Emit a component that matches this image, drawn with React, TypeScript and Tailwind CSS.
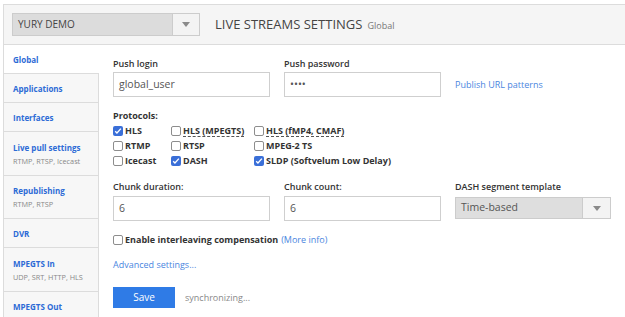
import React from "react";

const FONT = { fontFamily: '"Open Sans", "DejaVu Sans", sans-serif' };

type NavItem = { title: string; sub?: string; h: string };

const NAV: NavItem[] = [
  { title: "Global", h: "h-[29px]" },
  { title: "Applications", h: "h-[29px]" },
  { title: "Interfaces", h: "h-[29px]" },
  { title: "Live pull settings", sub: "RTMP, RTSP, Icecast", h: "h-[44px]" },
  { title: "Republishing", sub: "RTMP, RTSP", h: "h-[43px]" },
  { title: "DVR", h: "h-[29px]" },
  { title: "MPEGTS In", sub: "UDP, SRT, HTTP, HLS", h: "h-[44px]" },
];

function Caret() {
  return (
    <svg viewBox="0 0 8 5" className="h-[5px] w-[8px]" aria-hidden>
      <path d="M0 0h8L4 5z" fill="#8a8a8a" />
    </svg>
  );
}

function Check({ on }: { on?: boolean }) {
  if (on) {
    return (
      <span className="flex h-[10px] w-[10px] shrink-0 items-center justify-center rounded-[2px] bg-[#3a6fd8]">
        <svg viewBox="0 0 10 10" className="h-[8px] w-[8px]" aria-hidden>
          <path d="M1.5 5.2l2.2 2.2L8.6 2" fill="none" stroke="#fff" strokeWidth="1.7" />
        </svg>
      </span>
    );
  }
  return <span className="h-[10px] w-[10px] shrink-0 rounded-[2px] border border-[#8d8d8d] bg-white" />;
}

function Proto({ label, on, dashed }: { label: string; on?: boolean; dashed?: boolean }) {
  return (
    <div className="flex h-[15px] items-center gap-[2px]">
      <Check on={on} />
      <span
        className={
          dashed
            ? "border-b border-dashed border-[#555] text-[9px] font-bold leading-[11px] text-[#333]"
            : "text-[9px] font-bold leading-[11px] text-[#333]"
        }
      >
        {label}
      </span>
    </div>
  );
}

function Field({ label, value }: { label: string; value: string }) {
  return (
    <div className="flex w-[157px] flex-col">
      <div className="h-[12px] text-[9px] font-semibold leading-[12px] text-[#333]">{label}</div>
      <div className="mt-[2px] flex h-[25px] items-center border border-[#cfcfcf] bg-white pl-[5px] text-[10.5px] text-[#555]">
        {value}
      </div>
    </div>
  );
}

export default function App() {
  return (
    <div className="h-[317px] w-[625px] overflow-hidden bg-white pl-[3px] pt-[4px]" style={FONT}>
      <div className="flex h-full flex-col border-l border-t border-[#dcdcdc]">
        {/* header */}
        <div className="flex h-[40px] shrink-0 items-center border-b border-[#dcdcdc] bg-[#f5f5f5] pl-[8px]">
          <div className="flex h-[23px] w-[188px] border border-[#cccccc] bg-[#dcdcdc]">
            <div className="flex flex-1 items-center pl-[5px] text-[10px] uppercase text-[#444]">Yury demo</div>
            <div className="flex w-[27px] items-center justify-center border-l border-[#cccccc] bg-[#f3f3f3]">
              <Caret />
            </div>
          </div>
          <div className="ml-[15px] text-[13px] uppercase text-[#444]">Live streams settings</div>
          <div className="ml-[5px] mt-[2px] text-[9px] text-[#777]">Global</div>
        </div>

        <div className="flex flex-1">
          {/* sidebar */}
          <div className="flex w-[95px] shrink-0 flex-col">
            {NAV.map((item, i) => (
              <div
                key={item.title}
                className={[
                  "flex shrink-0 flex-col justify-center gap-[4px] border-b border-[#dcdcdc] pl-[9px]",
                  item.h,
                  i === 0 ? "bg-white" : "border-r bg-[#f7f7f7]",
                ].join(" ")}
              >
                <div className="text-[8px] font-bold leading-[11px] text-[#2d6bd6]">{item.title}</div>
                {item.sub && <div className="text-[7.3px] leading-[9px] text-[#888]">{item.sub}</div>}
              </div>
            ))}
            <div className="flex-1 border-r border-[#dcdcdc] bg-[#f7f7f7] pl-[9px] pt-[9px]">
              <div className="text-[8px] font-bold leading-[11px] text-[#2d6bd6]">MPEGTS Out</div>
            </div>
          </div>

          {/* main */}
          <div className="flex flex-1 flex-col pl-[14px] pt-[13px]">
            <div className="flex items-end gap-[14px]">
              <Field label="Push login" value="global_user" />
              <Field label="Push password" value="••••" />
              <div className="flex h-[25px] items-center text-[9px] text-[#4a86e0]">Publish URL patterns</div>
            </div>

            <div className="mt-[13px] h-[12px] text-[9px] font-bold leading-[12px] text-[#333]">Protocols:</div>
            <div className="mt-[1px] flex">
              <div className="flex w-[58px] flex-col">
                <Proto label="HLS" on />
                <Proto label="RTMP" />
                <Proto label="Icecast" />
              </div>
              <div className="flex w-[83px] flex-col">
                <Proto label="HLS (MPEGTS)" dashed />
                <Proto label="RTSP" />
                <Proto label="DASH" on />
              </div>
              <div className="flex flex-col">
                <Proto label="HLS (fMP4, CMAF)" dashed />
                <Proto label="MPEG-2 TS" />
                <Proto label="SLDP (Softvelum Low Delay)" on />
              </div>
            </div>

            <div className="mt-[13px] flex gap-[14px]">
              <div className="flex w-[157px] flex-col">
                <div className="h-[12px] text-[9px] font-semibold leading-[12px] text-[#333]">Chunk duration:</div>
                <div className="mt-[3px] flex h-[25px] items-center border border-[#cfcfcf] pl-[5px] text-[10.5px] text-[#555]">6</div>
              </div>
              <div className="flex w-[157px] flex-col">
                <div className="h-[12px] text-[9px] font-semibold leading-[12px] text-[#333]">Chunk count:</div>
                <div className="mt-[3px] flex h-[25px] items-center border border-[#cfcfcf] pl-[5px] text-[10.5px] text-[#555]">6</div>
              </div>
              <div className="flex w-[156px] flex-col">
                <div className="h-[12px] text-[9px] font-semibold leading-[12px] text-[#333]">DASH segment template</div>
                <div className="mt-[4px] flex h-[22px] border border-[#cccccc] bg-[#dedede]">
                  <div className="flex flex-1 items-center pl-[5px] text-[10.5px] text-[#555]">Time-based</div>
                  <div className="flex w-[28px] items-center justify-center border-l border-[#cccccc] bg-[#f3f3f3]">
                    <Caret />
                  </div>
                </div>
              </div>
            </div>

            <div className="mt-[12px] flex h-[14px] items-center gap-[2px]">
              <Check />
              <span className="text-[9px] font-bold text-[#333]">Enable interleaving compensation</span>
              <span className="ml-[1px] text-[9px] text-[#4a86e0]">(More info)</span>
            </div>

            <div className="mt-[12px] h-[12px] text-[9px] leading-[12px] text-[#4a86e0]">Advanced settings...</div>

            <div className="mt-[16px] flex items-center gap-[10px]">
              <button type="button" className="h-[21px] w-[62px] bg-[#2f7be6] text-[10px] text-white">
                Save
              </button>
              <span className="text-[9px] text-[#888]">synchronizing...</span>
            </div>
          </div>
        </div>
      </div>
    </div>
  );
}
